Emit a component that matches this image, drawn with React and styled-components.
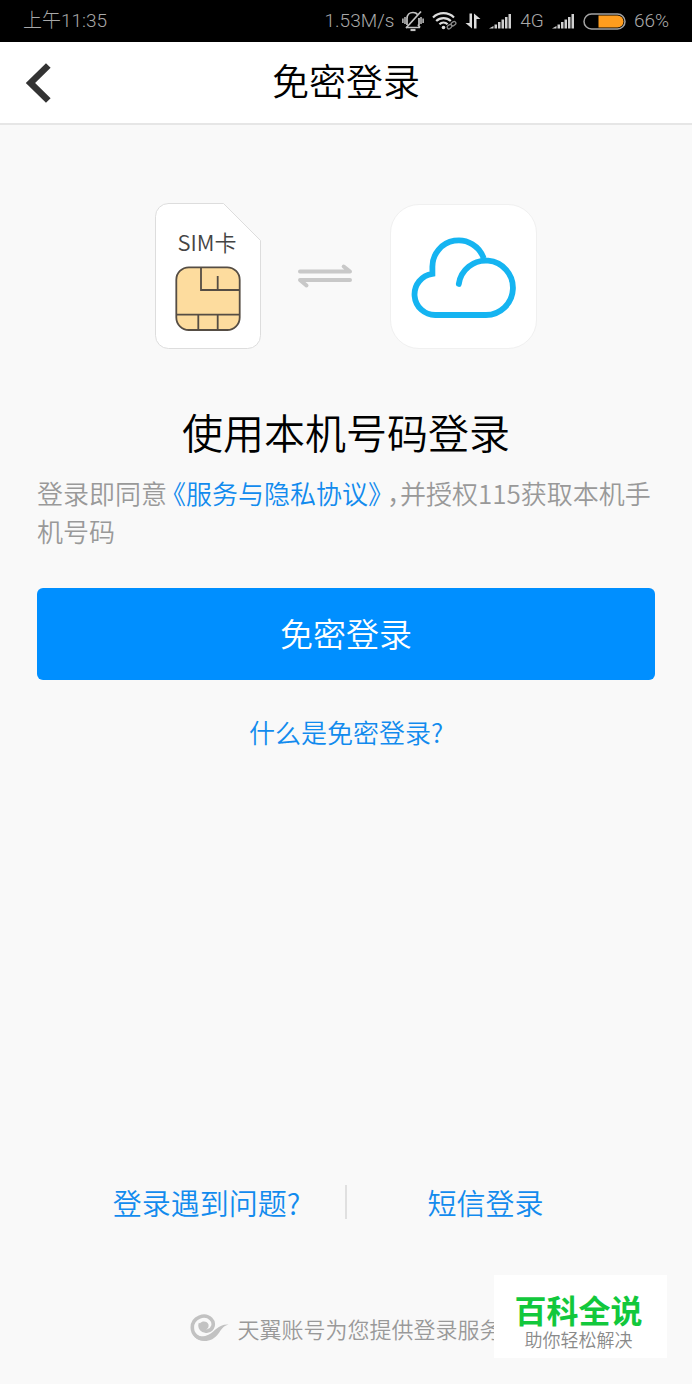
import React from 'react';
import styled, { createGlobalStyle } from 'styled-components';

const GlobalStyle = createGlobalStyle`
  *, *::before, *::after {
    box-sizing: border-box;
  }

  body {
    margin: 0;
    background: #f9f9f9;
    font-family: 'Noto Sans CJK SC', sans-serif;
    font-weight: 350;
  }

  h1, h2, p {
    margin: 0;
    font-weight: inherit;
  }

  svg {
    display: block;
    flex: none;
  }
`;

const Screen = styled.div`
  position: relative;
  display: flex;
  flex-direction: column;
  min-height: 100vh;
`;

const StatusBar = styled.div`
  display: flex;
  align-items: center;
  justify-content: space-between;
  height: 42px;
  padding: 0 23px;
  background: #000;
  color: #a9a9a9;
  font-family: Roboto, 'Noto Sans CJK SC', sans-serif;
  font-size: 19px;
  font-weight: 300;
  line-height: 40px;
`;

const StatusGroup = styled.div`
  display: flex;
  align-items: center;
  gap: 8px;
`;

const Header = styled.header`
  display: grid;
  grid-template-columns: 1fr auto 1fr;
  align-items: center;
  height: 83px;
  padding: 0 20px;
  border-bottom: 2px solid #e6e6e6;
  background: #fff;
`;

const BackButton = styled.button`
  justify-self: start;
  padding: 4px;
  border: 0;
  background: none;
`;

const Title = styled.h1`
  padding-bottom: 5px;
  color: #000;
  font-size: 37px;
  line-height: 76px;
`;

const Main = styled.main`
  display: flex;
  flex: 1;
  flex-direction: column;
  align-items: center;
  padding: 78px 37px 0;
`;

const Illustration = styled.div`
  display: flex;
  align-items: center;
  gap: 36px;
`;

const CloudTile = styled.div`
  width: 147px;
  height: 145px;
  border: 1px solid #f0f0f0;
  border-radius: 29px;
  background: #fff;
`;

const Heading = styled.h2`
  margin-top: 52px;
  color: #000;
  font-size: 41px;
  line-height: 60px;
`;

const Agreement = styled.p`
  width: 100%;
  margin-top: 13px;
  color: #999;
  font-size: 26px;
  font-feature-settings: 'halt';
  line-height: 38px;
`;

const Link = styled.a`
  color: #128bee;
  text-decoration: none;
`;

const AgreementLink = styled(Link)`
  margin: 0 6px;
`;

const LoginButton = styled.button`
  width: 100%;
  height: 92px;
  margin-top: 38px;
  padding: 0 0 2px;
  border: 0;
  border-radius: 6px;
  background: #008fff;
  color: #fff;
  font: inherit;
  font-size: 33px;
`;

const HelpLink = styled(Link)`
  margin-top: 33px;
  font-size: 26px;
  line-height: 38px;
`;

const BottomLinks = styled.nav`
  display: grid;
  grid-template-columns: 1fr 2px 1fr;
  align-items: center;
  padding: 0 68px;
  font-size: 29px;
  line-height: 44px;
  text-align: center;
`;

const Divider = styled.span`
  height: 34px;
  background: #e0e0e0;
`;

const Footer = styled.footer`
  display: flex;
  align-items: center;
  justify-content: center;
  gap: 8px;
  padding: 88px 0 40px;
  color: #999;
  font-size: 22px;
  line-height: 32px;
`;

const Stamp = styled.aside`
  position: absolute;
  right: 25px;
  bottom: 26px;
  width: 173px;
  padding: 14px 4px 9px 0;
  background: #fff;
  text-align: center;
`;

const StampName = styled.p`
  color: #12c83c;
  font-size: 32px;
  font-weight: 700;
  line-height: 40px;
`;

const StampNote = styled.p`
  color: #8a8a8a;
  font-size: 18px;
  line-height: 20px;
`;

const MuteIcon = () => (
  <svg width="22" height="22" viewBox="0 0 22 22" fill="none" stroke="#c4c4c4" strokeWidth="1.7" aria-hidden="true">
    <path d="M4 17.500H18M16 14.500 18 17.500M5 15V8.500C5 4.500 7.500 2.500 11 2.500C13 2.500 14.500 3 15.500 4.500M17 8V15" />
    <path d="M8.500 20H13.500" strokeWidth="2.2" />
    <path d="M19 1.500 4 18" />
    <path d="M3 7V14M.9 8.500V13M19 7V14M21.100 8.500V13" strokeWidth="1.5" />
  </svg>
);

const WifiIcon = () => (
  <svg width="25" height="20" viewBox="0 0 25 20" fill="none" stroke="#dcdcdc" strokeWidth="2.2" aria-hidden="true">
    <path d="M1 6.5a15 15 0 0 1 21 0M4.2 10a10.5 10.5 0 0 1 14.6 0M7.4 13.3a6 6 0 0 1 8.2 0" />
    <circle cx="11.5" cy="16.5" r="1.8" fill="#dcdcdc" stroke="none" />
    <g stroke="#898989" strokeWidth="1.3">
      <rect x="15" y="14" width="5" height="3.4" rx="1.7" transform="rotate(-38 17.5 15.7)" />
      <rect x="19" y="11" width="5" height="3.4" rx="1.7" transform="rotate(-38 21.5 12.7)" />
    </g>
  </svg>
);

const DataIcon = () => (
  <svg width="16" height="16" viewBox="0 0 16 16" fill="#dcdcdc" aria-hidden="true">
    <path d="M4.5 0.5H7V15.5L0.5 10H4.5zM9 15.5V.5L15.5 6H11.5V15.5z" />
  </svg>
);

const SignalIcon = () => (
  <svg width="23" height="16" viewBox="0 0 23 16" fill="#d0d0d0" aria-hidden="true">
    <path d="M0 15.5 4.5 13V15.5zM5.5 11.5H8V15.5H5.5zM9 9H11.5V15.5H9zM12.5 6.5H15V15.5H12.5zM16 4H18.5V15.5H16zM19.5 1H22V15.5H19.5z" />
  </svg>
);

const BatteryIcon = () => (
  <svg width="43" height="17" viewBox="0 0 43 17" aria-hidden="true">
    <rect x="1" y="1" width="41" height="15" rx="7.5" fill="none" stroke="#a3a3a3" strokeWidth="1.5" />
    <path d="M15.5 2.5H34.5a6 6 0 0 1 0 12H15.5z" fill="#ff9d1e" />
  </svg>
);

const BackIcon = () => (
  <svg width="28" height="40" viewBox="0 0 28 40" fill="none" stroke="#333" strokeWidth="6.6" aria-hidden="true">
    <path d="M24.3 2.5 6.5 20 24.3 37.5" />
  </svg>
);

const SimCard = () => (
  <svg width="106" height="146" viewBox="0 0 106 146" role="img" aria-label="SIM卡">
    <path
      d="M13 .5H68.5L105.5 37.5V132.5a13 13 0 0 1-13 13H13.5a13 13 0 0 1-13-13V13.5a13 13 0 0 1 13-13z"
      fill="#fff"
      stroke="#ddd"
    />
    <text x="52" y="48" fill="#444" fontSize="22" textAnchor="middle">SIM卡</text>
    <rect x="21.3" y="64.3" width="63.4" height="62.7" rx="12.5" fill="#fddc9e" />
    <g fill="none" stroke="#554d44" strokeWidth="1.8">
      <rect x="21.3" y="64.3" width="63.4" height="62.7" rx="12.5" />
      <path d="M46 64.3V87H84.7M62.7 73V87M21.3 111.7H84.7M43.3 111.7V127M62.7 111.7V127" />
    </g>
  </svg>
);

const SwapIcon = () => (
  <svg width="57" height="28" viewBox="0 0 57 28" fill="none" stroke="#c8c8c8" strokeWidth="4" strokeLinecap="round" strokeLinejoin="round" aria-hidden="true">
    <path d="M3 9.5H53L46.7 4.500M53 18H3L9.5 23.5" />
  </svg>
);

const CloudLogo = () => (
  <svg width="145" height="143" viewBox="1 1 145 143" fill="none" stroke="#15b4f1" strokeWidth="5.8" aria-hidden="true">
    <path d="M96 111H45.7A20.7 20.7 0 0 1 42.4 69.8V63A26.3 26.3 0 0 1 93.7 54.5" />
    <path d="M68.8 80A27.2 27.2 0 1 1 96 111" strokeLinecap="round" />
  </svg>
);

const TianyiLogo = () => (
  <svg width="39" height="28" viewBox="0 0 39 28" aria-hidden="true">
    <path
      d="M10.500 9.500C9 13.500 12 18 17.500 17C23.500 15.800 25 9 21 5C15 -1 2.300 3 2.300 13.500C2.300 20.500 8 25 14.500 25"
      fill="none"
      stroke="#c2c2c2"
      strokeWidth="3.6"
    />
    <path d="M10 9.500C12 6.500 17.500 7 18.500 10.500C19 13 18 14.500 16 15.500L17.500 18C12 19 8.500 14.500 10 9.500z" fill="#c2c2c2" />
    <path d="M2 18C6 23 13 23.500 19 20.500C25 17.500 28 10 38.500 10.500C33 12 31 16 28.500 19.500C25 24.500 20 27 14.500 27C8 27 3.500 23 2 18z" fill="#c2c2c2" />
  </svg>
);

export default function App() {
  return (
    <>
      <GlobalStyle />
      <Screen>
        <StatusBar>
          <span>上午11:35</span>
          <StatusGroup>
            <span>1.53M/s</span>
            <MuteIcon />
            <WifiIcon />
            <DataIcon />
            <SignalIcon />
            <span>4G</span>
            <SignalIcon />
            <BatteryIcon />
            <span>66%</span>
          </StatusGroup>
        </StatusBar>
        <Header>
          <BackButton type="button" aria-label="返回">
            <BackIcon />
          </BackButton>
          <Title>免密登录</Title>
        </Header>
        <Main>
          <Illustration>
            <SimCard />
            <SwapIcon />
            <CloudTile>
              <CloudLogo />
            </CloudTile>
          </Illustration>
          <Heading>使用本机号码登录</Heading>
          <Agreement>
            登录即同意<AgreementLink href="#agreement">《服务与隐私协议》</AgreementLink>，并授权115获取本机手机号码
          </Agreement>
          <LoginButton type="button">免密登录</LoginButton>
          <HelpLink href="#about">什么是免密登录?</HelpLink>
        </Main>
        <BottomLinks>
          <Link href="#help">登录遇到问题?</Link>
          <Divider />
          <Link href="#sms">短信登录</Link>
        </BottomLinks>
        <Footer>
          <TianyiLogo />
          <span>天翼账号为您提供登录服务</span>
        </Footer>
        <Stamp>
          <StampName>百科全说</StampName>
          <StampNote>助你轻松解决</StampNote>
        </Stamp>
      </Screen>
    </>
  );
}
